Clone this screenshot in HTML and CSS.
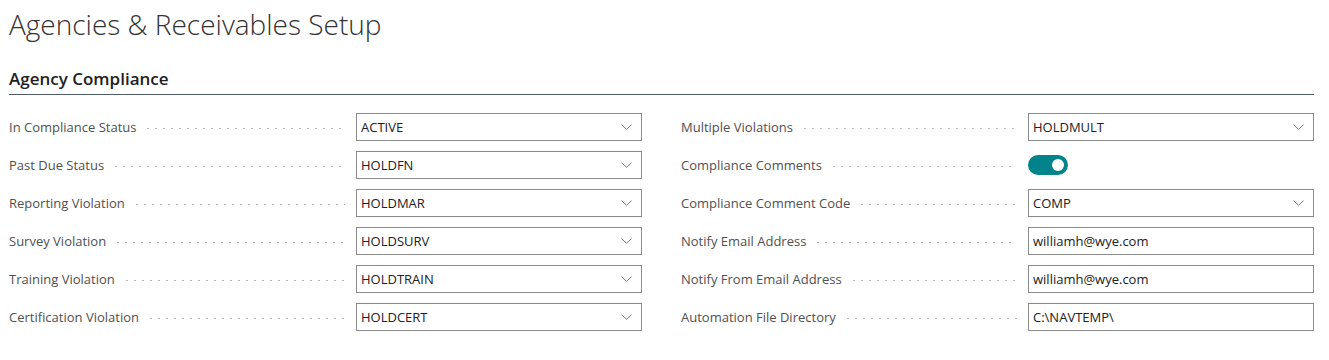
FILE: index.html
```html
<!DOCTYPE html>
<html lang="en">
<head>
    <meta charset="UTF-8">
    <meta name="viewport" content="width=device-width, initial-scale=1.0">
    <title>Agencies &amp; Receivables Setup</title>
    <link rel="stylesheet" href="styles.css">
</head>
<body>
    <div class="page">
        <h1 class="page-title">Agencies &amp; Receivables Setup</h1>

        <section class="fasttab">
            <h2 class="fasttab-title">Agency Compliance</h2>

            <div class="fields">
                <div class="column">
                    <div class="field">
                        <span class="caption">In Compliance Status</span><span class="leader"></span>
                        <div class="box select"><span class="value">ACTIVE</span><svg class="chevron" viewBox="0 0 12 6"><path d="M0.5 0.5 L6 5.5 L11.5 0.5"/></svg></div>
                    </div>
                    <div class="field">
                        <span class="caption">Past Due Status</span><span class="leader"></span>
                        <div class="box select"><span class="value">HOLDFN</span><svg class="chevron" viewBox="0 0 12 6"><path d="M0.5 0.5 L6 5.5 L11.5 0.5"/></svg></div>
                    </div>
                    <div class="field">
                        <span class="caption">Reporting Violation</span><span class="leader"></span>
                        <div class="box select"><span class="value">HOLDMAR</span><svg class="chevron" viewBox="0 0 12 6"><path d="M0.5 0.5 L6 5.5 L11.5 0.5"/></svg></div>
                    </div>
                    <div class="field">
                        <span class="caption">Survey Violation</span><span class="leader"></span>
                        <div class="box select"><span class="value">HOLDSURV</span><svg class="chevron" viewBox="0 0 12 6"><path d="M0.5 0.5 L6 5.5 L11.5 0.5"/></svg></div>
                    </div>
                    <div class="field">
                        <span class="caption">Training Violation</span><span class="leader"></span>
                        <div class="box select"><span class="value">HOLDTRAIN</span><svg class="chevron" viewBox="0 0 12 6"><path d="M0.5 0.5 L6 5.5 L11.5 0.5"/></svg></div>
                    </div>
                    <div class="field">
                        <span class="caption">Certification Violation</span><span class="leader"></span>
                        <div class="box select"><span class="value">HOLDCERT</span><svg class="chevron" viewBox="0 0 12 6"><path d="M0.5 0.5 L6 5.5 L11.5 0.5"/></svg></div>
                    </div>
                </div>

                <div class="column">
                    <div class="field">
                        <span class="caption">Multiple Violations</span><span class="leader"></span>
                        <div class="box select"><span class="value">HOLDMULT</span><svg class="chevron" viewBox="0 0 12 6"><path d="M0.5 0.5 L6 5.5 L11.5 0.5"/></svg></div>
                    </div>
                    <div class="field">
                        <span class="caption">Compliance Comments</span><span class="leader"></span>
                        <div class="toggle-wrap"><span class="toggle on"><span class="knob"></span></span></div>
                    </div>
                    <div class="field">
                        <span class="caption">Compliance Comment Code</span><span class="leader"></span>
                        <div class="box select"><span class="value">COMP</span><svg class="chevron" viewBox="0 0 12 6"><path d="M0.5 0.5 L6 5.5 L11.5 0.5"/></svg></div>
                    </div>
                    <div class="field">
                        <span class="caption">Notify Email Address</span><span class="leader"></span>
                        <div class="box"><span class="value">williamh@wye.com</span></div>
                    </div>
                    <div class="field">
                        <span class="caption">Notify From Email Address</span><span class="leader"></span>
                        <div class="box"><span class="value">williamh@wye.com</span></div>
                    </div>
                    <div class="field">
                        <span class="caption">Automation File Directory</span><span class="leader"></span>
                        <div class="box"><span class="value">C:\NAVTEMP\</span></div>
                    </div>
                </div>
            </div>
        </section>
    </div>
</body>
</html>
```

FILE: styles.css
```css
body {
    margin: 0;
    font-family: "Open Sans", Arial, sans-serif;
    color: #212121;
    background-color: #ffffff;
}
.page {
    padding: 0 15px 0 9px;
}
.page-title {
    margin: 5px 0 0 0;
    font-size: 28px;
    font-weight: 300;
    line-height: 38px;
    color: #333333;
}
.fasttab-title {
    margin: 25px 0 0 0;
    padding-bottom: 4px;
    font-size: 17px;
    font-weight: 600;
    line-height: 22px;
    color: #212121;
    border-bottom: 1px solid #505c6d;
}
.fields {
    display: grid;
    grid-template-columns: 1fr 1fr;
    column-gap: 39px;
    margin-top: 18px;
}
.column {
    display: flex;
    flex-direction: column;
    gap: 10px;
}
.field {
    display: grid;
    grid-template-columns: auto 1fr 286px;
    align-items: center;
    height: 28px;
}
.caption {
    font-size: 13px;
    color: #505050;
    white-space: nowrap;
}
.leader {
    height: 1px;
    margin: 3px 11px 0 8px;
    background-image: radial-gradient(circle, #b8b8b8 0.6px, transparent 0.8px);
    background-size: 8px 1px;
    background-repeat: repeat-x;
    background-position: left center;
}
.box {
    box-sizing: border-box;
    height: 28px;
    border: 1px solid #8a8a8a;
    display: flex;
    align-items: center;
    padding: 0 9px 0 4px;
}
.value {
    flex: 1;
    font-size: 13px;
    color: #212121;
}
.chevron {
    width: 11px;
    height: 6px;
    fill: none;
    stroke: #707070;
    stroke-width: 1;
}
.toggle-wrap {
    display: flex;
    align-items: center;
}
.toggle {
    position: relative;
    width: 40px;
    height: 20px;
    border-radius: 10px;
    background-color: #00838a;
}
.knob {
    position: absolute;
    top: 4px;
    right: 4px;
    width: 12px;
    height: 12px;
    border-radius: 50%;
    background-color: #ffffff;
}
```
